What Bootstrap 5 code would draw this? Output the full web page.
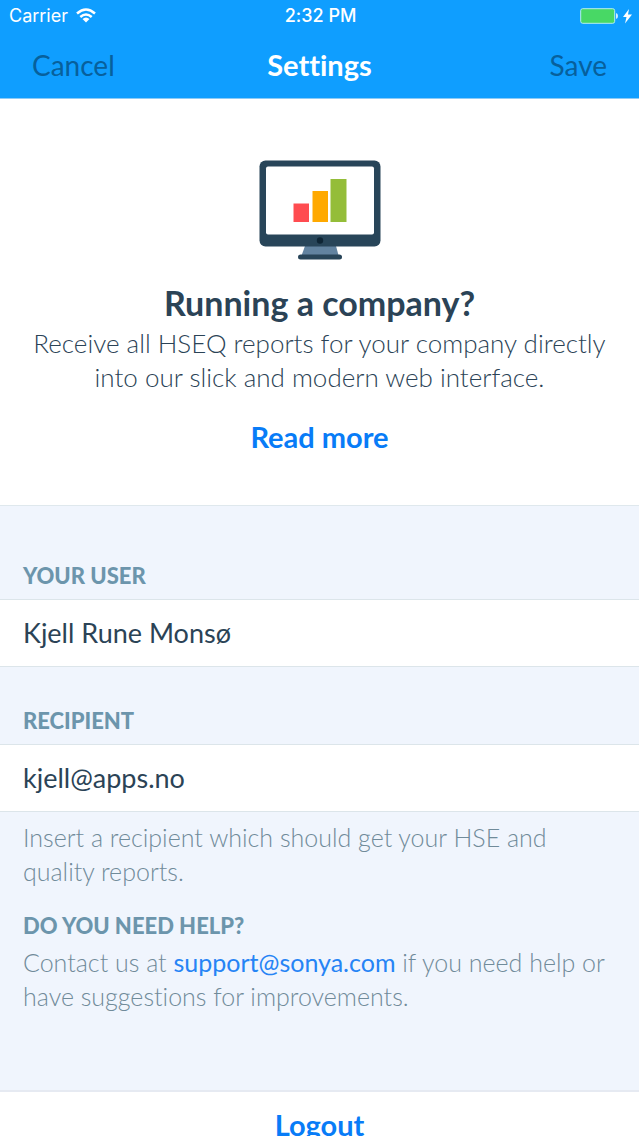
<!DOCTYPE html>
<html lang="en">
<head>
<meta charset="utf-8">
<meta name="viewport" content="width=device-width, initial-scale=1">
<title>Settings</title>
<link href="https://cdn.jsdelivr.net/npm/bootstrap@5.3.0/dist/css/bootstrap.min.css" rel="stylesheet">
<style>
  body { font-family: Lato, "Open Sans", sans-serif; font-size: 26px; line-height: 34px; color: #2b4356; background: #f0f5fd; font-variant-ligatures: none; }
  .app-bar { background: #0f9eff; border-bottom: 1px solid #8ccbf7; }
  .status-row { font-family: Inter, "Liberation Sans", sans-serif; font-size: 18px; line-height: 32px; padding: 0 7px 0 9px; }
  .side { flex: 1 1 0; }
  .bar-btn { display: block; font-size: 28px; line-height: 34px; color: #07609c; padding: 0; border: 0; background: none; }
  .title-row { padding: 16px 32px; }
  .bar-title { font-size: 29px; line-height: 34px; font-weight: 700; }
  .app-body { min-height: 0; scrollbar-width: none; }
  .app-body::-webkit-scrollbar { display: none; }
  .hero { padding: 61px 24px 51px; border-bottom: 1px solid #dfe8ed; }
  .hero-title { font-size: 34px; line-height: 40px; font-weight: 700; margin: 23px 0 3px; }
  .hero-text { font-weight: 300; margin-bottom: 26px; }
  .strong-link { font-size: 29px; line-height: 34px; font-weight: 700; color: #087cf7; text-decoration: none; }
  .pad-x { padding-left: 23px; padding-right: 23px; }
  .group-label { display: block; font-size: 22px; line-height: 30px; font-weight: 900; color: #6c95ac; margin: 0; }
  .field { display: block; width: 100%; font-size: 27px; line-height: 34px; color: #2b4356; background: #fff; border: 1px solid #dce5ea; border-width: 1px 0; border-radius: 0; padding: 16px 23px; }
  .user-head { padding-top: 55px; padding-bottom: 8px; }
  .recipient-head { padding-top: 39px; padding-bottom: 8px; }
  .note { font-size: 25px; font-weight: 300; color: #708b9a; margin: 0; }
  .note a { font-weight: 400; color: #2684f5; text-decoration: none; }
  .help { padding-top: 23px; padding-bottom: 77px; }
  .logout { display: block; width: 100%; border: 0; border-top: 2px solid #e6eaf2; background: #fff; padding: 16px; }
</style>
</head>
<body>
<div class="d-flex flex-column vh-100 overflow-hidden">
  <header class="app-bar flex-shrink-0 text-white">
    <div class="status-row d-flex align-items-center">
      <div class="side d-flex align-items-center gap-2">
        <span>Carrier</span>
        <svg width="20" height="16" viewBox="0 0 20 16" fill="none" stroke="#fff" stroke-width="2.5" aria-hidden="true">
          <path d="M1 5.500Q10-2.500 19 5.500M4.300 9Q10 4 15.700 9"/>
          <path d="M6.500 11Q10 8 13.500 11L10 14.500Z" fill="#fff" stroke="none"/>
        </svg>
      </div>
      <span class="fw-medium">2:32 PM</span>
      <div class="side d-flex align-items-center justify-content-end">
        <svg width="52" height="16" viewBox="0 0 52 16" aria-hidden="true">
          <rect x=".7" y=".7" width="34" height="14.600" rx="2" fill="#48d865" stroke="#b5eeee"/>
          <path d="M36 5q2 .5 2 3t-2 3z" fill="#d5efff"/>
          <path d="M49 1L43 9H46.500L45 15.500L52 6.500H48Z" fill="#fff"/>
        </svg>
      </div>
    </div>
    <div class="title-row d-flex align-items-center">
      <div class="side"><button type="button" class="bar-btn">Cancel</button></div>
      <h1 class="bar-title m-0">Settings</h1>
      <div class="side"><button type="button" class="bar-btn ms-auto">Save</button></div>
    </div>
  </header>

  <main class="app-body flex-grow-1 overflow-auto">
    <section class="hero bg-white text-center">
      <svg class="d-block mx-auto" width="122" height="100" viewBox="0 0 122 100" aria-hidden="true">
        <path d="M46 86H77L80 97H42Z" fill="#6283a0"/>
        <rect x="0.500" y="0.500" width="121" height="86" rx="6" fill="#284559"/>
        <rect x="7" y="6.500" width="108" height="68" rx="2" fill="#fff"/>
        <path d="M34.500 43.500H50V62H34.500Z" fill="#ff4c50"/>
        <path d="M53.500 31H69V62H53.500Z" fill="#ffa900"/>
        <path d="M71.500 19H87.500V62H71.500Z" fill="#94bd39"/>
        <circle cx="61" cy="80.500" r="3.200" fill="#0e2535"/>
        <rect x="39" y="94.500" width="44" height="5" rx="2.500" fill="#284559"/>
      </svg>
      <h2 class="hero-title">Running a company?</h2>
      <p class="hero-text">Receive all HSEQ reports for your company directly into our slick and modern web interface.</p>
      <a class="strong-link d-block" href="#more">Read more</a>
    </section>

    <form>
      <div class="pad-x user-head"><label class="group-label" for="user">YOUR USER</label></div>
      <input class="field" id="user" type="text" value="Kjell Rune Monsø">
      <div class="pad-x recipient-head"><label class="group-label" for="recipient">RECIPIENT</label></div>
      <input class="field" id="recipient" type="email" value="kjell@apps.no">
      <p class="note pad-x pt-2">Insert a recipient which should get your HSE and quality reports.</p>
    </form>

    <section class="pad-x help">
      <h2 class="group-label mb-1">DO YOU NEED HELP?</h2>
      <p class="note">Contact us at <a href="mailto:support@sonya.com">support@sonya.com</a> if you need help or have suggestions for improvements.</p>
    </section>
    <button type="button" class="logout strong-link">Logout</button>
  </main>
</div>
<script src="https://cdn.jsdelivr.net/npm/bootstrap@5.3.0/dist/js/bootstrap.bundle.min.js"></script>
</body>
</html>
